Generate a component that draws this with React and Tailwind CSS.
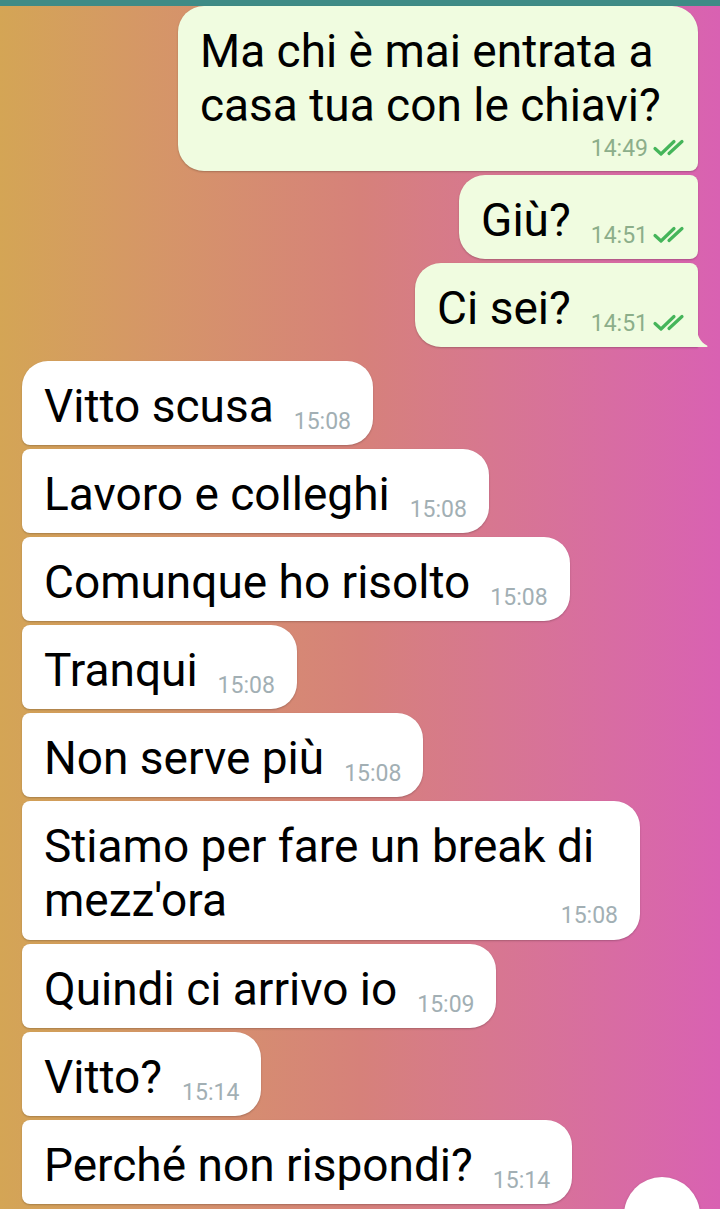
import React from "react";

const messages = [
  { out: true, lines: ["Ma chi è mai entrata a", "casa tua con le chiavi?"], time: "14:49", own: true, width: "w-[520px]", shape: "rounded-[26px] rounded-br-[8px]" },
  { out: true, lines: ["Giù?"], time: "14:51", shape: "rounded-[26px] rounded-tr-[8px] rounded-br-[8px]" },
  { out: true, lines: ["Ci sei?"], time: "14:51", tail: true, shape: "rounded-[26px] rounded-tr-[8px] rounded-br-none" },
  { lines: ["Vitto scusa"], time: "15:08", gapTop: true, shape: "rounded-[26px] rounded-bl-[8px]" },
  { lines: ["Lavoro e colleghi"], time: "15:08", shape: "rounded-[26px] rounded-tl-[8px] rounded-bl-[8px]" },
  { lines: ["Comunque ho risolto"], time: "15:08", shape: "rounded-[26px] rounded-tl-[8px] rounded-bl-[8px]" },
  { lines: ["Tranqui"], time: "15:08", shape: "rounded-[26px] rounded-tl-[8px] rounded-bl-[8px]" },
  { lines: ["Non serve più"], time: "15:08", shape: "rounded-[26px] rounded-tl-[8px] rounded-bl-[8px]" },
  { lines: ["Stiamo per fare un break di", "mezz'ora"], time: "15:08", width: "w-[618px]", shape: "rounded-[26px] rounded-tl-[8px] rounded-bl-[8px]" },
  { lines: ["Quindi ci arrivo io"], time: "15:09", shape: "rounded-[26px] rounded-tl-[8px] rounded-bl-[8px]" },
  { lines: ["Vitto?"], time: "15:14", shape: "rounded-[26px] rounded-tl-[8px] rounded-bl-[8px]" },
  { lines: ["Perché non rispondi?"], time: "15:14", shape: "rounded-[26px] rounded-tl-[8px] rounded-bl-[8px]" },
];

// double tick, drawn a bit heavier than the default
const Checks = () => (
  <svg width="38" height="20" viewBox="0 0 38 20" className="mb-[2px]">
    <path d="M3 10.5 L9 16 L22 3.5" fill="none" stroke="#45b55a" strokeWidth="3.2" strokeLinecap="round" strokeLinejoin="round" />
    <path d="M17 15.5 L30 3.5" fill="none" stroke="#45b55a" strokeWidth="3.2" strokeLinecap="round" />
  </svg>
);

const Meta = ({ out, time }) => (
  <div className="flex items-end gap-[4px] shrink-0">
    <span className={`text-[23px] leading-[23px] ${out ? "text-[#8cae8a]" : "text-[#a2afb4]"}`}>{time}</span>
    {out && <Checks />}
  </div>
);

const Bubble = ({ m }) => {
  const bg = m.out ? "bg-[#f0fce0]" : "bg-white";
  const multi = m.lines.length > 1;
  return (
    <div className={`flex ${m.out ? "justify-end pr-[22px]" : "justify-start pl-[22px]"} ${m.gapTop ? "mt-[10px]" : ""}`}>
      <div
        className={`relative ${bg} ${m.shape} ${m.width || "w-fit"} pl-[22px] ${m.out ? "pr-[8px]" : "pr-[22px]"} pt-[18px] ${m.own ? "pb-[11px]" : multi ? "pb-[13px]" : "pb-[12px]"} shadow-[0_1px_2px_rgba(0,0,0,0.22)]`}
      >
        {multi ? (
          <>
            {m.lines.slice(0, -1).map((l, i) => (
              <div key={i} className="text-[46px] leading-[54px] text-black whitespace-nowrap">{l}</div>
            ))}
            {m.own ? (
              <>
                <div className="text-[46px] leading-[54px] text-black whitespace-nowrap">{m.lines[m.lines.length - 1]}</div>
                <div className="flex justify-end mt-[5px]">
                  <Meta out={m.out} time={m.time} />
                </div>
              </>
            ) : (
              <div className="flex items-end justify-between">
                <span className="text-[46px] leading-[54px] text-black whitespace-nowrap">{m.lines[m.lines.length - 1]}</span>
                <Meta out={m.out} time={m.time} />
              </div>
            )}
          </>
        ) : (
          <div className="flex items-end">
            <span className="text-[46px] leading-[54px] text-black whitespace-nowrap">{m.lines[0]}</span>
            <div className="ml-[20px]">
              <Meta out={m.out} time={m.time} />
            </div>
          </div>
        )}
        {m.tail && (
          <svg width="12" height="24" viewBox="0 0 12 24" className="absolute right-[-10px] bottom-0">
            <path d="M0 0 C0.5 12 4 19 11 22.6 C12 23.2 11.6 24 10.6 24 L0 24 Z" fill="#f0fce0" />
          </svg>
        )}
      </div>
    </div>
  );
};

export default function App() {
  return (
    <div className="relative w-[720px] h-[1209px] overflow-hidden font-['Roboto',sans-serif] bg-linear-to-r from-[#d4a555] via-[#d6817a] to-[#d961b2]">
      <div className="h-[6px] bg-[#3f8b86]" />
      <div className="flex flex-col gap-[4px]">
        {messages.map((m, i) => (
          <Bubble key={i} m={m} />
        ))}
      </div>
      <div className="absolute left-[624px] top-[1177px] w-[76px] h-[76px] rounded-full bg-white shadow-[0_1px_3px_rgba(0,0,0,0.2)]" />
    </div>
  );
}
